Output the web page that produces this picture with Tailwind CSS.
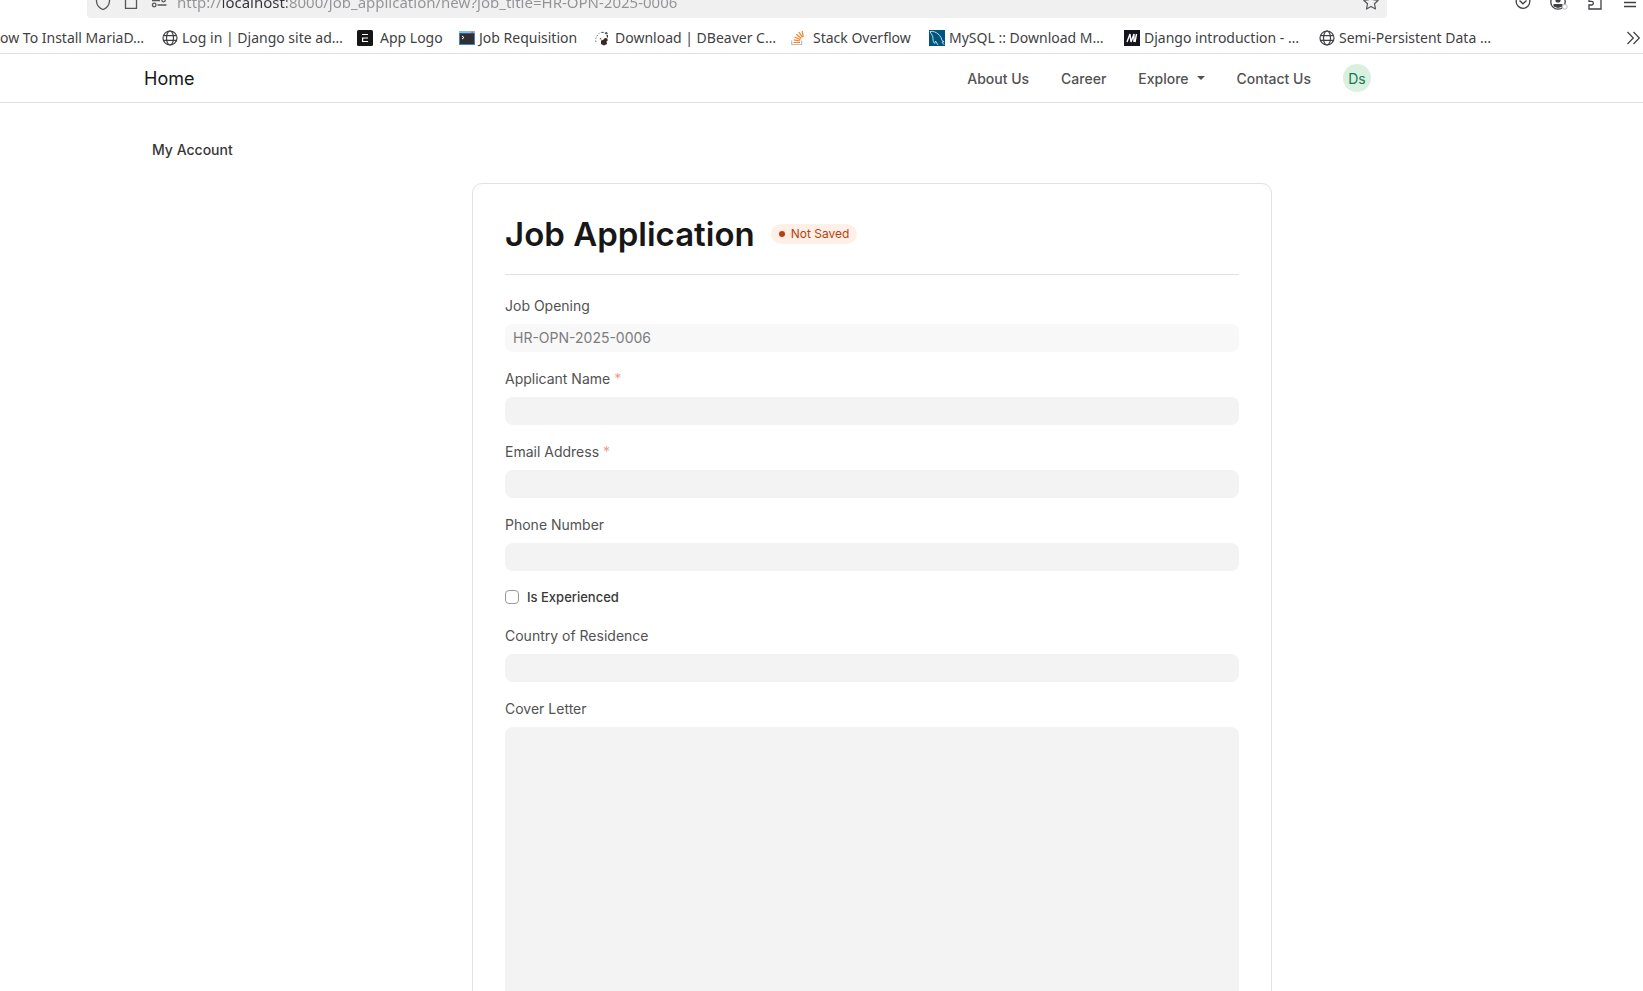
<!DOCTYPE html>
<html lang="en">
<head>
<meta charset="utf-8">
<title>Job Application</title>
<meta name="viewport" content="width=device-width, initial-scale=1">
<script src="https://cdn.jsdelivr.net/npm/@tailwindcss/browser@4"></script>
</head>
<body class="flex h-screen flex-col overflow-hidden bg-white font-['Inter',sans-serif] text-[#171717]">

<div class="shrink-0 border-b border-[#e0e0e6] font-['Noto_Sans',sans-serif] text-[#3f3f44]">
  <!-- Address bar -->
  <div class="flex h-[18px] items-end overflow-hidden">
    <div class="ml-[87px] flex h-8 max-w-[1300px] min-w-0 flex-1 shrink-0 items-center rounded bg-[#f0f0f1] pr-2 pl-2">
      <div class="flex w-[82px] shrink-0 items-center gap-3 text-[#55555a]">
        <svg class="size-4" viewBox="0 0 16 16" fill="none" stroke="currentColor" stroke-width="1.3"><path d="M8 1 14.500 3.200V7c0 4-3 7.500-6.500 8.500C4.500 14.500 1.500 11 1.500 7V3.200z"/></svg>
        <svg class="size-4" viewBox="0 0 16 16" fill="none" stroke="currentColor" stroke-width="1.3"><path d="M2.500 1.500H10l3.500 4v8.900h-11z"/></svg>
        <svg class="size-4" viewBox="0 0 16 16" fill="none" stroke="currentColor" stroke-width="1.3"><path d="M1 6.500h8M6.500 11h9"/><circle cx="12.500" cy="6" r="1.800"/><circle cx="3.200" cy="11" r="1.800"/></svg>
      </div>
      <input type="text" aria-label="Address" value="http://localhost:8000/job_application/new?job_title=HR-OPN-2025-0006" class="min-w-0 flex-1 bg-[linear-gradient(90deg,#929296_46px,#333338_46px,#333338_110px,#929296_110px)] bg-clip-text text-[15px] leading-6 text-transparent outline-none">
      <button type="button" aria-label="Bookmark this page"><svg class="size-4" viewBox="0 0 16 16" fill="none" stroke="#55555a" stroke-width="1.200" stroke-linejoin="round"><path d="m8 1 2.200 4.700 5 .6-3.700 3.500 1 5.200L8 12.400 3.500 15l1-5.200L.8 6.300l5-.6z"/></svg></button>
    </div>
    <div class="ml-auto flex h-8 shrink-0 items-center gap-[19px] pr-[5px]">
      <button type="button" aria-label="Save to Pocket"><svg class="size-4" viewBox="0 0 16 16" fill="none" stroke="currentColor" stroke-width="1.300"><path d="M1.200 2h13.600v5.500a6.800 6.800 0 0 1-13.600 0z"/><path d="m4.500 6.500 3.500 3.300 3.500-3.300"/></svg></button>
      <button type="button" aria-label="Account"><svg class="h-4 w-[18px]" viewBox="0 0 18 16"><circle cx="8" cy="8" r="7.200" fill="none" stroke="currentColor" stroke-width="1.300"/><circle cx="8" cy="6" r="2.600" fill="currentColor"/><path d="M3.500 10h9v2.500L8 14l-4.500-1.500z" fill="currentColor"/><circle cx="14.800" cy="12.800" r="2.400" fill="#fff" stroke="#bbb"/></svg></button>
      <button type="button" aria-label="Extensions"><svg class="size-4" viewBox="0 0 16 16" fill="none" stroke="currentColor" stroke-width="1.300"><path d="M2 15v-4h2.500a1.800 1.800 0 0 0 0-3.600H2V4h4a2 2 0 0 1 4 0h4v11z"/></svg></button>
      <button type="button" aria-label="Menu"><svg class="size-4" viewBox="0 0 16 16" fill="none" stroke="currentColor" stroke-width="1.300"><path d="M2 3.500h12M2 8.500h12M2 12.500h12"/></svg></button>
    </div>
  </div>

  <!-- Bookmarks -->
  <nav aria-label="Bookmarks" class="flex h-[35px] items-center pt-1 text-[14px] leading-5 whitespace-nowrap">
    <a href="#" class="w-[162px] shrink-0">ow To Install MariaD…</a>
    <a href="#" class="flex w-[195px] shrink-0 items-center gap-1">
      <svg class="size-4" viewBox="0 0 16 16" fill="none" stroke="currentColor" stroke-width="1.200"><circle cx="8" cy="8" r="7"/><ellipse cx="8" cy="8" rx="3.500" ry="7"/><path d="M1.500 5.700h13M1.500 10.300h13"/></svg>Log in | Django site ad…</a>
    <a href="#" class="flex w-[102px] shrink-0 items-center gap-[7px]">
      <svg class="size-4" viewBox="0 0 16 16"><rect width="16" height="16" rx="1.500" fill="#161616"/><path d="M5 4.500h6M5.500 8H11M5.500 11.500H11M5.600 7.500v4.500" fill="none" stroke="#fff" stroke-width="1.200"/></svg>App Logo</a>
    <a href="#" class="flex w-[136px] shrink-0 items-center gap-1">
      <svg class="size-4" viewBox="0 0 16 16"><path fill="#4a7fc4" d="M0 1h16v14H0z"/><path fill="#8db8ea" d="M0 1h16v2H0z"/><path fill="#2e3033" d="M1 3.500h14V14H1z"/><path fill="#e0524a" d="M12.500 1.500H14V3h-1.500z"/><path d="m3 6 2 1.500L3 9" fill="none" stroke="#fff"/></svg>Job Requisition</a>
    <a href="#" class="flex w-[196px] shrink-0 items-center gap-1">
      <svg class="size-4" viewBox="0 0 16 16"><path d="M.8 12V8.500L2.500 5 5.500 2" fill="none" stroke="#777" stroke-dasharray="1.500 1.500"/><path d="M5.500 3 8 1.500l1 1.500zM9.500 3l2-1.200 1.500 2-2 .7z" fill="#555"/><path d="m4.500 9 1-1 1.500 1.500zM6 10.500l2-.5 2-2 2.500.5V11l-1 .5.500 2.500-3 1.500L6 14z" fill="#3b2724"/><path d="M11.500 5H13v2.500h-1z" fill="#333"/></svg>Download | DBeaver C…</a>
    <a href="#" class="flex w-[138px] shrink-0 items-center gap-1.5">
      <svg class="size-4" viewBox="0 0 16 16" fill="none"><path d="M.7 10.500v4h10v-4" stroke="#bcbcbc" stroke-width="1.200"/><path d="M2.500 12.500h6.500M2.700 9.800l6.500 1.200M3.500 7l6 2.800M5.300 4.300l5 4.200M7.800 2l3.700 5.300M11.200.8l1 6" stroke="#f48024" stroke-width="1.200"/></svg>Stack Overflow</a>
    <a href="#" class="flex w-[195px] shrink-0 items-center gap-1">
      <svg class="size-4" viewBox="0 0 16 16" fill="none"><path fill="#00557f" d="M0 0h16v16H0z"/><path d="M1 1.500C4 1 7 2 9 4c3 2 3.500 5 4 6.500l2 1.200-2 .5 2 2.500M1 1.500C2 4 4 5.500 4 8.500c0 2.500.500 4 1.700 5L6.500 11 9 15" stroke="#d4e5ee" stroke-width=".9"/></svg>MySQL :: Download M…</a>
    <a href="#" class="flex w-[195px] shrink-0 items-center gap-1">
      <svg class="size-4" viewBox="0 0 16 16" fill="none"><path fill="#15141a" d="M0 0h16v16H0z"/><path d="M3 12 6 4l1 8 3-8v8M12.500 4 11 12" stroke="#fff" stroke-width="1.400"/></svg>Django introduction - …</a>
    <a href="#" class="flex shrink-0 items-center gap-1">
      <svg class="size-4" viewBox="0 0 16 16" fill="none" stroke="currentColor" stroke-width="1.200"><circle cx="8" cy="8" r="7"/><ellipse cx="8" cy="8" rx="3.500" ry="7"/><path d="M1.500 5.700h13M1.500 10.300h13"/></svg>Semi-Persistent Data …</a>
    <button type="button" aria-label="Show more bookmarks" class="ml-auto shrink-0 pr-0.5"><svg class="size-4" viewBox="0 0 16 16" fill="none" stroke="currentColor" stroke-width="1.200"><path d="m2.500 2 5.800 6-5.800 6M8.500 2l5.800 6-5.800 6"/></svg></button>
  </nav>
</div>

<main class="min-h-0 flex-1 overflow-y-auto [scrollbar-width:none]">
  <!-- Site navigation -->
  <header class="border-b border-[#e2e2e2]">
    <div class="ml-36 flex h-12 max-w-[1227px] items-center">
      <a href="#" class="mr-auto text-[18px]">Home</a>
      <nav class="flex items-center gap-8 text-[14px] font-medium text-[#525252]">
        <a href="#">About Us</a>
        <a href="#">Career</a>
        <button type="button" class="flex items-center gap-2">Explore<svg class="h-1 w-2" viewBox="0 0 8 4"><path d="M0 0h8L4 4z" fill="currentColor"/></svg></button>
        <a href="#">Contact Us</a>
        <button type="button" class="size-7 rounded-full bg-[#daf0e1] font-normal text-[#16794c]">Ds</button>
      </nav>
    </div>
  </header>

  <div class="ml-36 max-w-[1227px]">
    <a href="#" class="mt-9 ml-2 block w-fit text-[14px] leading-[21px] font-medium text-[#383838]">My Account</a>

    <form class="mt-[23px] ml-[328px] max-w-[800px] rounded-[10px] border border-[#e2e2e2] px-8 pb-8">
      <div class="flex h-[91px] items-center gap-4 border-b border-[#e2e2e2] pt-2.5">
        <h1 class="text-[33px] leading-[48px] font-semibold">Job Application</h1>
        <span class="flex h-5 items-center gap-1.5 rounded-full bg-[#fff0e7] px-2 text-[12px] text-[#bd3e0c]"><span class="size-1.5 rounded-full bg-current"></span>Not Saved</span>
      </div>
      <div class="flex flex-col gap-4 pt-5 text-[14px] leading-[21px] text-[#525252]">
        <div class="flex flex-col gap-2"><label for="opening">Job Opening</label><input id="opening" type="text" readonly value="HR-OPN-2025-0006" class="h-7 rounded-lg bg-[#f8f8f8] px-2 pb-0.5 text-[#7c7c7c]"></div>
        <div class="flex flex-col gap-2"><label for="name">Applicant Name <span class="text-[#f09a93]">*</span></label><input id="name" type="text" required class="h-7 rounded-lg bg-[#f3f3f3] px-2"></div>
        <div class="flex flex-col gap-2"><label for="email">Email Address <span class="text-[#f09a93]">*</span></label><input id="email" type="email" required class="h-7 rounded-lg bg-[#f3f3f3] px-2"></div>
        <div class="flex flex-col gap-2"><label for="phone">Phone Number</label><input id="phone" type="tel" class="h-7 rounded-lg bg-[#f3f3f3] px-2"></div>
        <div class="flex h-[22px] items-center gap-2 pb-0.5"><input id="experienced" type="checkbox" class="size-3.5 appearance-none rounded border border-[#999999] bg-white checked:bg-[#171717]"><label for="experienced" class="text-[13px] font-medium text-[#383838]">Is Experienced</label></div>
        <div class="flex flex-col gap-2"><label for="country">Country of Residence</label><input id="country" type="text" class="h-7 rounded-lg bg-[#f3f3f3] px-2"></div>
        <div class="flex flex-col gap-2"><label for="cover">Cover Letter</label><textarea id="cover" class="h-[300px] resize-none rounded-lg bg-[#f3f3f3] px-2 py-1.5"></textarea></div>
      </div>
    </form>
  </div>
</main>
</body>
</html>
